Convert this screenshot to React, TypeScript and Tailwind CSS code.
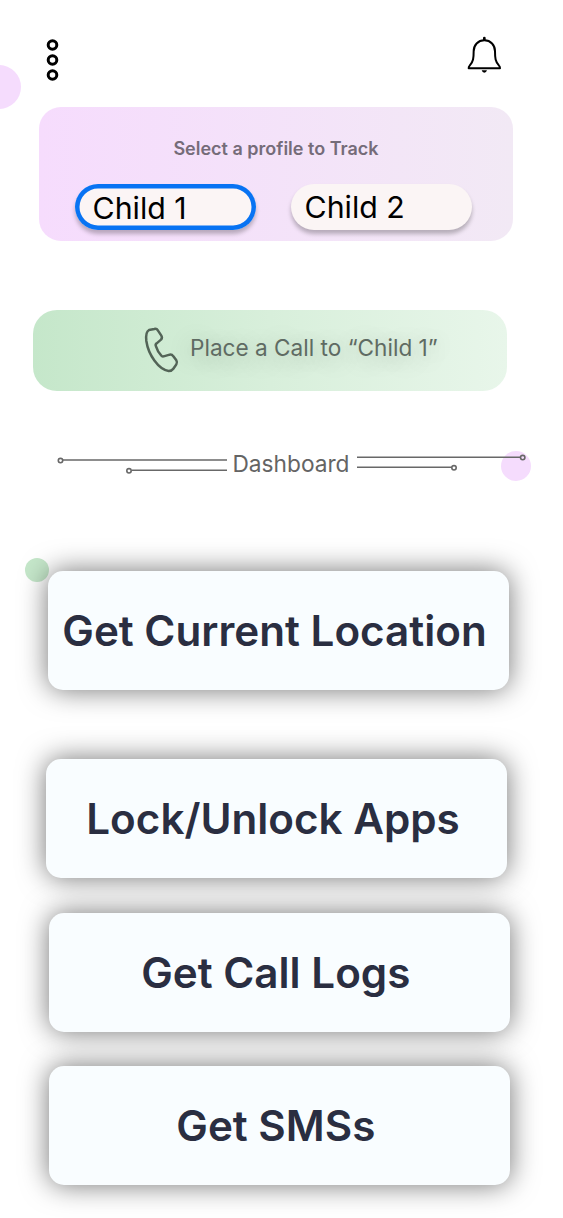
import React from "react";

function MenuDots() {
  return (
    <svg width="14" height="44" viewBox="0 0 14 44" fill="none" stroke="#000" strokeWidth="3">
      <circle cx="7.5" cy="7" r="4.3" />
      <circle cx="7.5" cy="22" r="4.3" />
      <circle cx="7.5" cy="37" r="4.3" />
    </svg>
  );
}

function Bell() {
  return (
    <svg width="34" height="38" viewBox="0 0 102 114" fill="none" stroke="#000" strokeWidth="6" strokeLinecap="round" strokeLinejoin="round">
      <path d="M52 13C33 13 20 27 20 46C20 66 19 77 8 89Q5 92 5 97H99Q99 92 96 89C85 77 84 66 84 46C84 27 71 13 52 13Z" />
      <path d="M52 6V11" strokeWidth="8" />
      <path d="M44 103H60Q58 110 52 110Q46 110 44 103Z" fill="#000" stroke="none" />
    </svg>
  );
}

function Phone() {
  return (
    <svg width="40" height="52" viewBox="0 0 120 156" fill="none" stroke="#536457" strokeWidth="7.5" strokeLinejoin="round">
      <path d="M27 18L43 15Q50 13 54 20L64 35Q68 41 63 47L50 58Q45 62 48 67C52 80 58 89 64 95Q66 98 71 97L89 92Q96 91 100 97L109 109Q113 115 109 121L100 134Q95 141 86 141C55 136 25 92 19 51Q16 24 27 18Z" />
    </svg>
  );
}

function ActionButton({ label, className }: { label: string; className: string }) {
  return (
    <button
      className={`relative block h-[119px] w-[461px] rounded-[15px] bg-[#f9fdff] pr-[7px] text-center text-[42.2px] leading-[120px] font-semibold whitespace-nowrap text-[#2a2e41] shadow-[0_0_28px_rgba(0,0,0,0.55)] ${className}`}
    >
      {label}
    </button>
  );
}

export default function App() {
  return (
    <main className="relative h-[1218px] w-[563px] overflow-hidden bg-white font-['Inter',sans-serif]">
      <div className="absolute top-[65px] left-[-23px] size-[44px] rounded-full bg-[#f5dcfd]" />
      <div className="absolute top-[451px] left-[501px] size-[30px] rounded-full bg-[#f5dcfd]" />
      <div className="absolute top-[558px] left-[25px] size-[24px] rounded-full bg-[#c5e7ca]" />

      <header className="flex h-[106.5px] items-start justify-between pt-[36px] pr-[62px] pl-[45px]">
        <button className="mt-[2px]" aria-label="Menu"><MenuDots /></button>
        <button aria-label="Notifications"><Bell /></button>
      </header>

      <section className="ml-[39px] h-[134.5px] w-[474px] rounded-[22px] bg-linear-to-r from-[#f6dcfd] to-[#f2e9f5] pt-[31px]">
        <h2 className="text-center text-[18px] leading-[22px] font-semibold text-[#756c79]">Select a profile to Track</h2>
        <div className="mt-[24px] flex gap-[35px] pl-[36px]">
          <button className="h-[46.5px] w-[181px] rounded-full bg-[#fbf5f5] pt-[2px] pl-[17.5px] text-left text-[30.3px] leading-[45px] text-black shadow-[inset_0_0_0_4.5px_#0873f3,0_4px_4px_rgba(0,0,0,0.25)]">Child 1</button>
          <button className="h-[46.5px] w-[181px] rounded-full bg-[#fbf5f5] pl-[13.5px] text-left text-[30.3px] leading-[46px] text-black shadow-[0_4px_4px_rgba(0,0,0,0.25)]">Child 2</button>
        </div>
      </section>

      <button className="mt-[68.5px] ml-[33px] flex h-[81.5px] w-[474px] items-start rounded-[24px] bg-linear-to-r from-[#c5e7ca] via-[#d8efdb] to-[#e8f6ea] pt-[14px] pl-[107px] text-[#5f6b63]">
        <Phone />
        <span className="mt-[10px] ml-[10px] text-[22.6px] leading-[28px] whitespace-nowrap [text-shadow:0_4px_24px_rgba(0,0,0,0.3)]">Place a Call to “Child 1”</span>
      </button>

      <div className="relative mt-[57px] ml-[56px] flex h-[32px] w-[471px] items-center">
        <svg width="171" height="32" viewBox="0 0 171 32" fill="none" stroke="#686868" strokeWidth="1.6">
          <path d="M7 12H171M76 22.2H171" />
          <circle cx="4.5" cy="12.6" r="2.2" />
          <circle cx="73" cy="22.8" r="2.2" />
        </svg>
        <h2 className="w-[130px] pr-[2px] text-center text-[22.7px] leading-[28px] text-[#646464]">Dashboard</h2>
        <svg width="170" height="32" viewBox="0 0 170 32" fill="none" stroke="#686868" strokeWidth="1.6">
          <path d="M0 9.2H163M0 19.2H95" />
          <circle cx="165.7" cy="9.6" r="2.2" />
          <circle cx="97" cy="19.8" r="2.2" />
        </svg>
      </div>

      <nav className="mt-[90.5px]">
        <ActionButton label="Get Current Location" className="ml-[47.5px]" />
        <ActionButton label="Lock/Unlock Apps" className="mt-[69.5px] ml-[46px]" />
        <ActionButton label="Get Call Logs" className="mt-[35px] ml-[48.8px]" />
        <ActionButton label="Get SMSs" className="mt-[34px] ml-[48.8px]" />
      </nav>
    </main>
  );
}
